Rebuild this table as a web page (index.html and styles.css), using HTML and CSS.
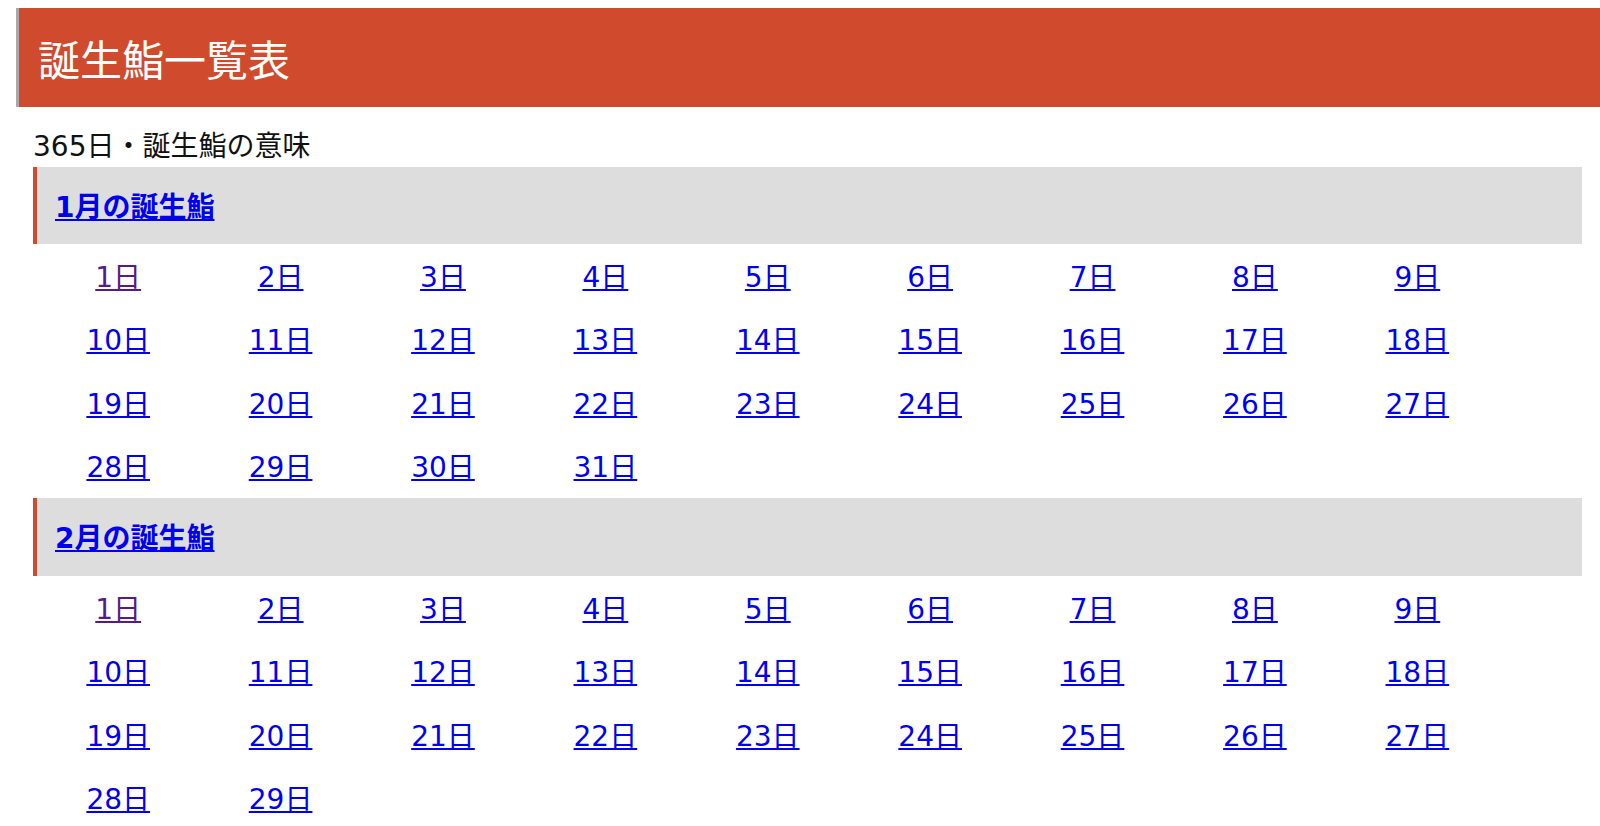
FILE: index.html
```html
<!DOCTYPE html>
<html lang="ja">
<head>
<meta charset="utf-8">
<title>誕生鮨一覧表</title>
<link rel="stylesheet" href="styles.css">
</head>
<body>
<h1 class="page-title">誕生鮨一覧表</h1>
<p class="lead">365日・誕生鮨の意味</p>

<section class="month">
  <h2 class="month-title"><a href="#jan">1月の誕生鮨</a></h2>
  <ul class="days">
    <li><a class="visited" href="#">1日</a></li>
    <li><a href="#">2日</a></li>
    <li><a href="#">3日</a></li>
    <li><a href="#">4日</a></li>
    <li><a href="#">5日</a></li>
    <li><a href="#">6日</a></li>
    <li><a href="#">7日</a></li>
    <li><a href="#">8日</a></li>
    <li><a href="#">9日</a></li>
    <li><a href="#">10日</a></li>
    <li><a href="#">11日</a></li>
    <li><a href="#">12日</a></li>
    <li><a href="#">13日</a></li>
    <li><a href="#">14日</a></li>
    <li><a href="#">15日</a></li>
    <li><a href="#">16日</a></li>
    <li><a href="#">17日</a></li>
    <li><a href="#">18日</a></li>
    <li><a href="#">19日</a></li>
    <li><a href="#">20日</a></li>
    <li><a href="#">21日</a></li>
    <li><a href="#">22日</a></li>
    <li><a href="#">23日</a></li>
    <li><a href="#">24日</a></li>
    <li><a href="#">25日</a></li>
    <li><a href="#">26日</a></li>
    <li><a href="#">27日</a></li>
    <li><a href="#">28日</a></li>
    <li><a href="#">29日</a></li>
    <li><a href="#">30日</a></li>
    <li><a href="#">31日</a></li>
  </ul>
</section>

<section class="month">
  <h2 class="month-title"><a href="#feb">2月の誕生鮨</a></h2>
  <ul class="days">
    <li><a class="visited" href="#">1日</a></li>
    <li><a href="#">2日</a></li>
    <li><a href="#">3日</a></li>
    <li><a href="#">4日</a></li>
    <li><a href="#">5日</a></li>
    <li><a href="#">6日</a></li>
    <li><a href="#">7日</a></li>
    <li><a href="#">8日</a></li>
    <li><a href="#">9日</a></li>
    <li><a href="#">10日</a></li>
    <li><a href="#">11日</a></li>
    <li><a href="#">12日</a></li>
    <li><a href="#">13日</a></li>
    <li><a href="#">14日</a></li>
    <li><a href="#">15日</a></li>
    <li><a href="#">16日</a></li>
    <li><a href="#">17日</a></li>
    <li><a href="#">18日</a></li>
    <li><a href="#">19日</a></li>
    <li><a href="#">20日</a></li>
    <li><a href="#">21日</a></li>
    <li><a href="#">22日</a></li>
    <li><a href="#">23日</a></li>
    <li><a href="#">24日</a></li>
    <li><a href="#">25日</a></li>
    <li><a href="#">26日</a></li>
    <li><a href="#">27日</a></li>
    <li><a href="#">28日</a></li>
    <li><a href="#">29日</a></li>
  </ul>
</section>
</body>
</html>
```

FILE: styles.css
```css
html, body {
  margin: 0;
  padding: 0;
  background: #fff;
  overflow: hidden;
}
body {
  padding-top: 8px;
  font-family: "DejaVu Sans", "Noto Sans CJK JP", sans-serif;
  color: #111;
}
.page-title {
  margin: 0 0 0 16px;
  height: 99px;
  box-sizing: border-box;
  display: flex;
  align-items: center;
  padding-left: 19px;
  background: #d04b2d;
  border-left: 3px solid #a9a9a9;
  color: #fff;
  font-family: "Noto Sans CJK JP", sans-serif;
  font-size: 42px;
  font-weight: 400;
  line-height: 1;
}
.lead {
  margin: 0 0 0 33px;
  height: 60px;
  box-sizing: border-box;
  padding-top: 26px;
  font-size: 28px;
  line-height: 28px;
}
.month-title {
  margin: 0 18px 0 33px;
  height: 77px;
  box-sizing: border-box;
  display: flex;
  align-items: center;
  padding-left: 18px;
  padding-top: 4px;
  background: #dddddd;
  border-left: 4px solid #d04b2d;
  font-size: 28px;
  font-weight: 700;
  line-height: 1;
}
.month + .month .month-title {
  height: 78px;
}
a {
  color: #0000ee;
  text-decoration: underline;
}
a.visited {
  color: #551a8b;
}
.days {
  list-style: none;
  margin: 0 0 0 37px;
  padding: 0;
  display: grid;
  grid-template-columns: repeat(9, 162.4px);
  grid-auto-rows: 63.5px;
  align-items: center;
  justify-items: center;
  font-size: 28px;
  line-height: 1;
}
.days li {
  padding-top: 4px;
}
```
